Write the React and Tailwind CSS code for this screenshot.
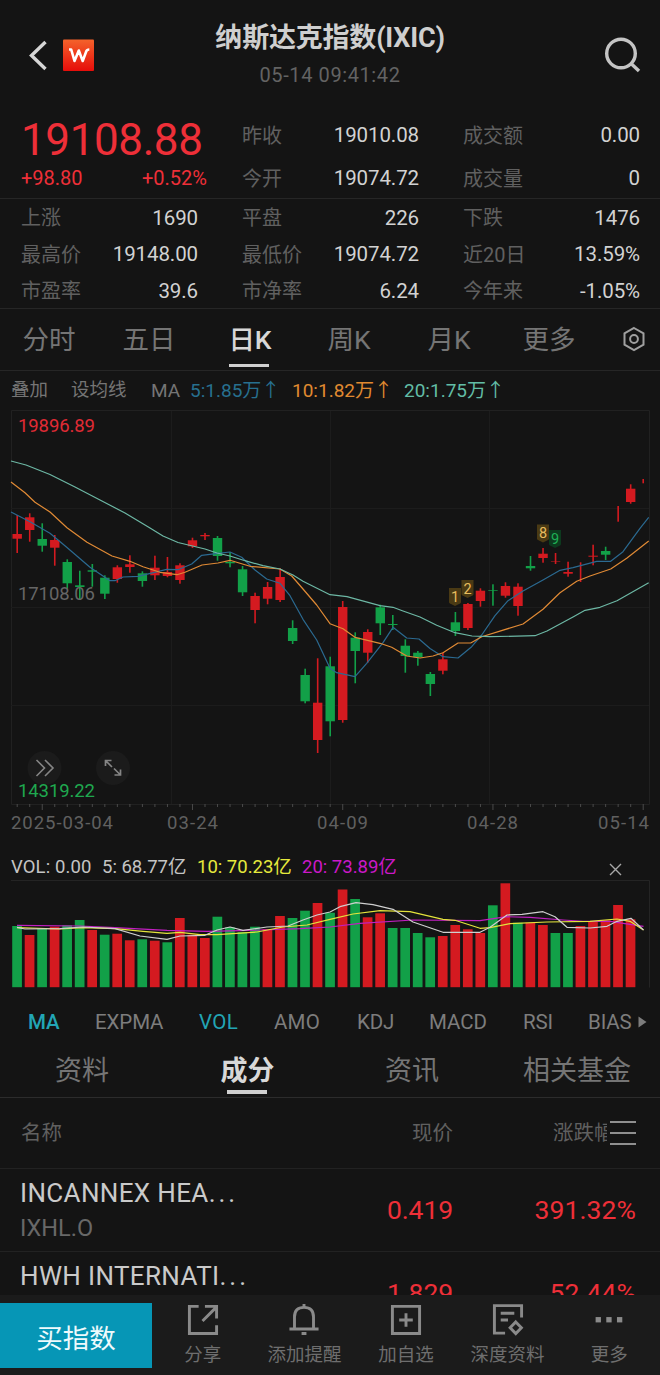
import React from "react";

// [direction, body top, body bottom, wick top, wick bottom]
const candles = [
  ["r", 534, 538.7, 515, 553], ["r", 517.3, 530, 513.3, 541.7], ["g", 539, 545.7, 523.3, 551.7],
  ["r", 540, 547.7, 535, 565.7], ["g", 562, 583.3, 559.3, 588.7], ["g", 585.3, 587, 570.7, 600],
  ["g", 570.3, 571.7, 564, 586.7], ["g", 577.7, 593.7, 575.3, 599], ["r", 567.3, 579, 565.3, 582.7],
  ["r", 564.3, 567, 555.3, 572.7], ["g", 573.3, 581, 571.3, 586.7], ["r", 567.7, 575.3, 555.7, 580],
  ["r", 572, 576, 557, 577.3], ["r", 565.3, 580, 563.3, 583.7], ["r", 540.3, 546.3, 537.7, 548],
  ["r", 535, 536.3, 533, 540], ["g", 538, 556, 536, 560.7], ["g", 562, 563.3, 552.3, 567.3],
  ["g", 569.3, 592.3, 566, 596], ["r", 596, 610, 592.7, 623.3], ["r", 587, 598.7, 582, 604.3],
  ["r", 577, 600, 568.3, 602], ["g", 628, 641, 620.3, 644], ["g", 675, 701.3, 668.7, 703.3],
  ["r", 702.7, 740, 658.3, 753], ["g", 666.3, 721.3, 656.7, 736.3], ["r", 607, 720, 601, 722.7],
  ["g", 637.7, 651, 632.3, 683.3], ["r", 632, 652.7, 629.3, 662.7], ["g", 607.3, 623.3, 604.7, 635],
  ["g", 624, 625, 615, 630], ["g", 645.7, 656, 639.3, 672.7], ["g", 652.7, 657.3, 651, 665.7],
  ["g", 674, 684, 672, 696], ["r", 659.3, 670.7, 652.7, 674.3], ["g", 622.3, 631, 612, 636],
  ["r", 604, 628, 603, 630], ["r", 590.7, 601, 588.3, 606.7], ["g", 590, 590.7, 584.3, 605.7],
  ["r", 586, 595.7, 582.3, 597.7], ["r", 586.7, 606, 583.3, 615.7], ["g", 566, 568.3, 556, 570.7],
  ["r", 553.7, 558, 548, 562.7], ["r", 561, 561.5, 553, 564], ["r", 572, 573.7, 561.7, 576.7],
  ["r", 0, 0, 562.3, 582], ["r", 555.7, 556.7, 544.7, 565.3], ["g", 551, 554.7, 546.7, 560],
  ["r", 0, 0, 506, 521.7], ["r", 488.7, 502, 484.3, 503.7], ["r", 0, 0, 479, 483.3],
];

const volumes = [
  ["g", 926], ["r", 935], ["g", 929], ["r", 926.7], ["g", 925.3], ["g", 920], ["r", 930], ["g", 934.7],
  ["r", 933.7], ["r", 940.3], ["g", 939.3], ["r", 940.7], ["g", 942.3], ["r", 918], ["r", 934.7], ["r", 938],
  ["g", 916.7], ["g", 927.3], ["g", 932], ["g", 926.7], ["r", 929], ["r", 916], ["g", 918], ["g", 910.7],
  ["r", 903], ["g", 912.7], ["r", 889.5], ["g", 899], ["r", 917.3], ["r", 913.3], ["g", 928], ["g", 928],
  ["g", 933], ["g", 937.3], ["r", 936], ["r", 925], ["r", 929.3], ["r", 933], ["g", 905.3], ["r", 883.3],
  ["g", 922.7], ["r", 922.7], ["r", 925], ["g", 933], ["g", 933], ["r", 926], ["r", 922], ["r", 920.3],
  ["r", 905], ["r", 919.3],
];

const ma20 = "11,461 26,465 50,474.5 75,487 100,500 125,513 150,528 163,536 178,542.5 205,549 217,553 230,556 245,560.7 263,565.7 280,569 293,575 303,581.3 330,594.7 347,596.7 380,605.7 393,607.3 403,611 420,617 436.7,625.3 455,632.7 472,636 490,636.7 535,635.7 547,631 573,617 585,610.3 600,607.3 617,600.7 648.7,582.7";
const ma10 = "11,482 25,492.7 35,502.3 50,512 67,527.7 87,542.3 112,556 130,561.3 143,566.7 160,572.3 177,574.7 185,572.3 202,565 218,563 230,560.3 250,566.3 280,569 291.7,576 303,589 316.7,605 330,623.7 343,628.7 355,637.3 380,643.3 391.7,647.3 406.7,656 420,658 433,656 443,652.7 458,643 470.7,643 481.7,636.7 523,624 543,609.3 560,592.7 576.7,581.3 590,576 610.7,569 626.7,558.3 648.7,541";
const ma5 = "11,512 30,521.7 50,533.3 66.7,547.3 90,567.3 110,580.7 115,580.7 123,577 138,576.3 166.7,569.3 178,569.7 191.7,564 201.7,555.3 218,553.3 230,552 241.7,557.3 255,570 266.7,579 280,583.3 290,595.7 303,619.3 316.7,640 330,668.3 336.7,672.7 355,676.7 366.7,663.3 383,642.7 393,627.3 406.7,638 419,639 430,648.5 443,656.7 458,658 471.7,646.7 481.7,635 495,615.7 508,600.7 523,591 543,580 560,570.3 573,567.7 596.7,561.3 610.7,561.3 623,551.7 640,528.3 648.7,517.3";

const v5 = "17,927.3 25,929 60,928.7 83,927 115,928.7 140,936 167,939.3 180,936 205,935.3 217,930 230,927 243,930.3 267,927 288,926 303,920 317,915 330,912 340,906.7 356,902.7 373,904.7 393,909.3 413,922 443,932.3 480,932.3 490,927.3 507,915 522,914.3 543,911.7 555,916.7 567,927.3 590,928 607,926.3 617,921.3 631,918.3 643.5,930";
const v10 = "17,927.7 60,929 83,927.7 115,928.7 143,931.3 167,933.3 180,932.3 200,934.7 217,934.7 257,932 283,927 307,925 330,919.3 353,914 380,910.7 410,911.7 443,919.3 455,920.3 480,928.3 490,927.7 510,923.7 547,922 590,921.3 617,919 630,921.3 643.5,930";
const v20 = "17,925.3 80,926 115,927.7 167,930.3 207,931.3 240,930.7 300,928.7 330,927 360,923.3 413,920 480,920.7 507,916.7 530,917.3 563,920 583,921.3 610,921.3 643.5,926.3";

const cx = (i) => 17.2 + i * 12.52;
const RED = "#d41a20";
const GREEN = "#12a048";
const FONT = "Roboto, 'Noto Sans CJK SC', sans-serif";

const markers = [
  ["1", 455, 596, "#4a3a14", "#e8bd5e"],
  ["2", 467.5, 588, "#4a3a14", "#e8bd5e"],
  ["8", 543, 532.5, "#4a3a14", "#e8bd5e"],
  ["9", 555, 538, "#0d3a1e", "#1fae55"],
];

function Header() {
  return (
    <header className="flex h-[110px] items-start justify-between pl-[27px] pr-[19px]">
      <div className="flex w-[100px] items-center pt-[39px]">
        <svg width="22" height="32" viewBox="0 0 22 32" fill="none" stroke="#d6d6d6" strokeWidth="3.4">
          <path d="M18.500 3 4.500 16.500 18.500 30" />
        </svg>
        <svg className="ml-[14px]" width="32" height="32" viewBox="0 0 32 32" fill="none">
          <defs>
            <linearGradient id="logo" x1="0" y1="0" x2="0" y2="1">
              <stop offset="0" stopColor="#f4622b" />
              <stop offset="1" stopColor="#e60d0a" />
            </linearGradient>
          </defs>
          <rect width="31" height="31.500" y="0.500" rx="1" fill="url(#logo)" />
          <path d="M6 10.500h2.200l3.300 11.500 4.300-10.500 3.900 10.500 3.600-9.700q.6-1.800 3-1.800" stroke="#fff" strokeWidth="2.600" strokeLinejoin="round" />
        </svg>
      </div>
      <div className="-ml-[8px] flex flex-col items-center pt-[18px]">
        <h1 className="h-[40px] whitespace-nowrap text-[27px] font-bold leading-[41px] tracking-[-0.2px] text-[#cfcfcf]">纳斯达克指数(IXIC)</h1>
        <div className="h-[34px] text-[20px] leading-[34px] tracking-[0.6px] text-[#636363]">05-14 09:41:42</div>
      </div>
      <div className="flex w-[100px] justify-end pt-[36px]">
        <svg width="38" height="38" viewBox="0 0 38 38" fill="none" stroke="#c4c4c4" strokeWidth="3.400">
          <circle cx="18" cy="17.500" r="14.300" />
          <path d="M27.500 27 36 35" />
        </svg>
      </div>
    </header>
  );
}

function Stat({ k, v }) {
  return (
    <div className="flex items-center justify-between whitespace-nowrap">
      <span className="text-[20px] text-[#606060]">{k}</span>
      <span className="text-[20.5px] tracking-[-0.1px] text-[#d2d2d2]">{v}</span>
    </div>
  );
}

function Quote() {
  return (
    <section className="grid h-[89px] grid-cols-[177px_177px_177px] gap-x-[44px] border-b border-[#262626] pl-[21px] pt-[4px]">
      <div className="text-[#ee2f38]">
        <div className="h-[50px] whitespace-nowrap text-[44px] leading-[53px] tracking-[-0.4px]">19108.88</div>
        <div className="flex w-[186px] justify-between text-[20px] leading-[28px]">
          <span>+98.80</span>
          <span>+0.52%</span>
        </div>
      </div>
      <div className="grid grid-rows-[43px_43px]">
        <Stat k="昨收" v="19010.08" />
        <Stat k="今开" v="19074.72" />
      </div>
      <div className="grid grid-rows-[43px_43px]">
        <Stat k="成交额" v="0.00" />
        <Stat k="成交量" v="0" />
      </div>
    </section>
  );
}

function Stats() {
  const rows = [
    ["上涨", "1690"], ["平盘", "226"], ["下跌", "1476"],
    ["最高价", "19148.00"], ["最低价", "19074.72"], ["近20日", "13.59%"],
    ["市盈率", "39.6"], ["市净率", "6.24"], ["今年来", "-1.05%"],
  ];
  return (
    <section className="grid h-[110px] grid-cols-[177px_177px_177px] grid-rows-[36.5px_36.5px_36.5px] gap-x-[44px] border-b border-[#262626] pl-[21px] pt-px">
      {rows.map(([k, v]) => <Stat key={k} k={k} v={v} />)}
    </section>
  );
}

function PeriodTabs() {
  const tabs = ["分时", "五日", "日K", "周K", "月K", "更多"];
  return (
    <nav className="flex h-[62px] border-b border-[#262626] text-[26.5px] text-[#757575]">
      {tabs.map((t) =>
        t === "日K" ? (
          <div key={t} className="flex w-[100px] flex-col items-center justify-between pb-[3px] font-medium leading-[62px] text-[#d8d8d8]">
            <span className="h-[55px]">{t}</span>
            <span className="mr-[2px] h-[3px] w-[40px] bg-[#d0d0d0]" />
          </div>
        ) : (
          <div key={t} className="w-[100px] pr-[2px] text-center leading-[62px]">{t}</div>
        )
      )}
      <div className="flex w-[60px] items-center pb-px pl-[22px]">
        <svg width="24" height="26" viewBox="0 0 24 26" fill="none" stroke="#a0a0a0" strokeWidth="2">
          <path d="M12 2 21.500 7.300V18.700L12 24 2.500 18.700V7.300Z" />
          <circle cx="12" cy="13" r="3.900" />
        </svg>
      </div>
    </nav>
  );
}

function MaRow() {
  return (
    <div className="flex h-[39px] items-center whitespace-nowrap pl-[11px] pt-px text-[18.5px] text-[#757575]">
      <span className="w-[60px]">叠加</span>
      <span className="w-[80px]">设均线</span>
      <span className="w-[39px] text-[19px]">MA</span>
      <span className="w-[102px] text-[19px] text-[#27708f]">5:1.85万↑</span>
      <span className="w-[112px] text-[19px] text-[#e08a30]">10:1.82万↑</span>
      <span className="text-[19px] text-[#62bda6]">20:1.75万↑</span>
    </div>
  );
}

function PriceChart() {
  return (
    <svg className="block" width="660" height="430" viewBox="0 410 660 430" fontFamily={FONT}>
      <g stroke="#212121" fill="none">
        <path d="M11.500 410.500H649.500V804.500H11.500Z" />
        <path d="M171.500 411V804M330.500 411V804M489.500 411V804M11 508.500H649M11 607.500H649M11 705.500H649" stroke="#1c1c1c" />
      </g>
      <g stroke="#4a4a4a">
        {candles.map((_, i) => (
          <path key={i} d={`M${cx(i)} 804V${i % 12 === 2 ? 810 : 807}`} />
        ))}
      </g>
      {candles.map(([c, a, b, t, u], i) => (
        <g key={i} fill={c === "r" ? RED : GREEN}>
          <rect x={cx(i) - 0.8} y={t} width="1.600" height={u - t} />
          {a > 0 && <rect x={cx(i) - 4.7} y={a} width="9.400" height={b - a} />}
        </g>
      ))}
      <g fill="none" strokeWidth="1.200" strokeLinejoin="round">
        <polyline points={ma5} stroke="#2b6a91" />
        <polyline points={ma10} stroke="#e08a35" />
        <polyline points={ma20} stroke="#6db8a5" />
      </g>
      {markers.map(([n, x, y, bg, fg]) => (
        <g key={n}>
          <path d={`M${x - 6} ${y - 8}h12v14q0 1-1 1.500l-5 2.500-5-2.500q-1-.5-1-1.500z`} fill={bg} />
          <text x={x} y={y + 5.5} textAnchor="middle" fontSize="14.500" fill={fg}>{n}</text>
        </g>
      ))}
      <circle cx="44.500" cy="768" r="17" fill="#1b1b1b" />
      <circle cx="113" cy="768" r="17" fill="#1b1b1b" />
      <path d="M36.500 760l8 8-8 8M45 760l8 8-8 8" stroke="#858585" strokeWidth="1.600" fill="none" />
      <path d="M105.500 766V760.500H111.500M106 761l6 6M120.500 769.500V775H114.500M120 774.500l-6-6" stroke="#858585" strokeWidth="1.700" fill="none" />
      <text x="18" y="431.500" fontSize="18.500" textLength="77" fill="#e02b35">19896.89</text>
      <text x="18" y="599.500" fontSize="18.500" textLength="77" fill="#666">17108.06</text>
      <text x="18" y="797" fontSize="18.500" textLength="77" fill="#1fa84f">14319.22</text>
      <g fontSize="18.500" fill="#606060">
        <text x="11" y="829" textLength="102">2025-03-04</text>
        <text x="167" y="829" textLength="51">03-24</text>
        <text x="317" y="829" textLength="51">04-09</text>
        <text x="467" y="829" textLength="51">04-28</text>
        <text x="598" y="829" textLength="51">05-14</text>
      </g>
    </svg>
  );
}

function VolumePanel() {
  return (
    <section>
      <div className="flex h-[40px] items-center whitespace-nowrap pl-[11px] pt-[16px] text-[18.5px] text-[#c4c4c4]">
        <span className="w-[91px] tracking-[0.1px]">VOL: 0.00</span>
        <span className="w-[95px]">5: 68.77亿</span>
        <span className="w-[105px] text-[#e6ea3c]">10: 70.23亿</span>
        <span className="w-[307px] text-[#cb18c8]">20: 73.89亿</span>
        <svg width="13" height="13" viewBox="0 0 13 13" className="mt-[3px]" stroke="#a8a8a8" strokeWidth="1.400">
          <path d="M1 1 12 12M12 1 1 12" />
        </svg>
      </div>
      <svg className="block" width="660" height="110" viewBox="0 880 660 110">
        <path d="M11 880.500H649.500V987.500" stroke="#242424" fill="none" />
        {volumes.map(([c, t], i) => (
          <rect key={i} x={cx(i) - 5} y={t} width="9.700" height={987.2 - t} fill={c === "r" ? RED : GREEN} />
        ))}
        <g fill="none" strokeWidth="1.200" strokeLinejoin="round">
          <polyline points={v20} stroke="#c01fc0" />
          <polyline points={v10} stroke="#e4e43c" />
          <polyline points={v5} stroke="#cfcfcf" />
        </g>
      </svg>
    </section>
  );
}

const indicators = [
  ["MA", "w-[67px] font-medium text-[#22a5b5]"],
  ["EXPMA", "w-[104px]"],
  ["VOL", "w-[75px] tracking-[0.4px] text-[#22a5b5]"],
  ["AMO", "w-[83px] tracking-[0.2px]"],
  ["KDJ", "w-[72px]"],
  ["MACD", "w-[94px]"],
  ["RSI", "w-[65px]"],
  ["BIAS", "w-[50px]"],
];

function Indicators() {
  return (
    <div className="flex h-[60px] items-center whitespace-nowrap pl-[28px] pt-[4px] text-[20.5px] tracking-[-0.1px] text-[#7d7d7d]">
      {indicators.map(([n, cls]) => <span key={n} className={cls}>{n}</span>)}
      <svg width="9" height="12" viewBox="0 0 9 12" fill="#7d7d7d"><path d="M0.500 0.500 8.500 6 0.500 11.500Z" /></svg>
    </div>
  );
}

function SectionTabs() {
  return (
    <nav className="flex h-[48px] border-b border-[#2c2c2c] text-[27px] leading-[43px] text-[#757575]">
      {["资料", "成分", "资讯", "相关基金"].map((t) =>
        t === "成分" ? (
          <div key={t} className="flex w-[165px] flex-col items-center justify-between pb-[3px] font-bold text-[#d8d8d8]">
            <span className="h-[40px]">{t}</span>
            <span className="mr-[2px] h-[4px] w-[40px] bg-[#d0d0d0]" />
          </div>
        ) : (
          <div key={t} className="w-[165px] pr-px text-center">{t}</div>
        )
      )}
    </nav>
  );
}

function Components() {
  return (
    <section className="h-[197px] overflow-hidden">
      <div className="flex h-[71px] items-center border-b border-[#222] pl-[21px] text-[20.5px] text-[#606060]">
        <span className="w-[391px] pt-px">名称</span>
        <span className="w-[141px] pt-px">现价</span>
        <span className="w-[54px] overflow-hidden whitespace-nowrap pt-px">涨跌幅</span>
        <svg className="ml-[3px]" width="26" height="26" viewBox="0 0 26 26" stroke="#8f8f8f" strokeWidth="2">
          <path d="M0 2H26M0 13H26M0 24H26" />
        </svg>
      </div>
      <Row name="INCANNEX HEA" code="IXHL.O" price="0.419" change="391.32%" />
      <Row name="HWH INTERNATI" price="1.829" change="52.44%" />
    </section>
  );
}

function Row({ name, code, price, change }) {
  return (
    <div className="flex h-[83px] items-center whitespace-nowrap border-b border-[#222] pl-[20px] pr-[24px]">
      <div className="flex h-[74px] w-[300px] flex-col">
        <span className="h-[38px] text-[26px] leading-[40px] tracking-[0.35px] text-[#cacaca]">
          {name}<span className="tracking-[3px]">...</span>
        </span>
        {code && <span className="h-[34px] text-[23.5px] leading-[34px] text-[#686868]">{code}</span>}
      </div>
      <span className="w-[133px] text-right text-[26.5px] tracking-[-0.1px] text-[#ee2f38]">{price}</span>
      <span className="grow text-right text-[26.5px] tracking-[0.1px] text-[#ee2f38]">{change}</span>
    </div>
  );
}

const actions = [
  ["分享", <g><path d="M12.500 3.500H3V31.500H31V23" /><path d="M16.500 18.500 30 5M19 3.500H31V16" /></g>],
  ["添加提醒", <g><path d="M2 26.800H32M7.200 26.500V14.500Q7.200 4.500 17 4.500T26.800 14.500V26.500" /><path d="M17 1V5M14.500 31.500H19.500" /></g>],
  ["加自选", <g><path d="M3 3.500H31V31.500H3Z" /><path d="M17 10.500V24.500M10 17.500H24" /></g>],
  ["深度资料", <g><path d="M14 31H3V2.700H31V15M9.500 10.500H23.500M9.500 17.500H17" /><path d="M25 19.500 30.800 25.500 25 31.500 19.200 25.500Z" /></g>],
  ["更多", <g fill="#8a8a8a" stroke="none"><rect x="3.200" y="14.500" width="5.500" height="5.500" /><rect x="14.200" y="14.500" width="5.500" height="5.500" /><rect x="25.200" y="14.500" width="5.500" height="5.500" /></g>],
];

function BottomBar() {
  return (
    <footer className="flex h-[80px] bg-[#1b1b1b]">
      <button className="mt-[8px] h-[65px] w-[152px] bg-[#0696b6] pt-[7px] text-[26.5px] text-[#eefafc]">买指数</button>
      {actions.map(([label, icon]) => (
        <div key={label} className="flex w-[101.6px] flex-col items-center pt-[8px]">
          <svg width="34" height="34" viewBox="0 0 34 34" fill="none" stroke="#8a8a8a" strokeWidth="3">{icon}</svg>
          <span className="whitespace-nowrap text-[18.5px] leading-[39px] text-[#6e6e6e]">{label}</span>
        </div>
      ))}
    </footer>
  );
}

export default function App() {
  return (
    <main className="flex h-[1375px] w-[660px] flex-col overflow-hidden bg-[#141414] font-[Roboto,'Noto_Sans_CJK_SC',sans-serif]">
      <Header />
      <Quote />
      <Stats />
      <PeriodTabs />
      <MaRow />
      <PriceChart />
      <VolumePanel />
      <Indicators />
      <SectionTabs />
      <Components />
      <BottomBar />
    </main>
  );
}
